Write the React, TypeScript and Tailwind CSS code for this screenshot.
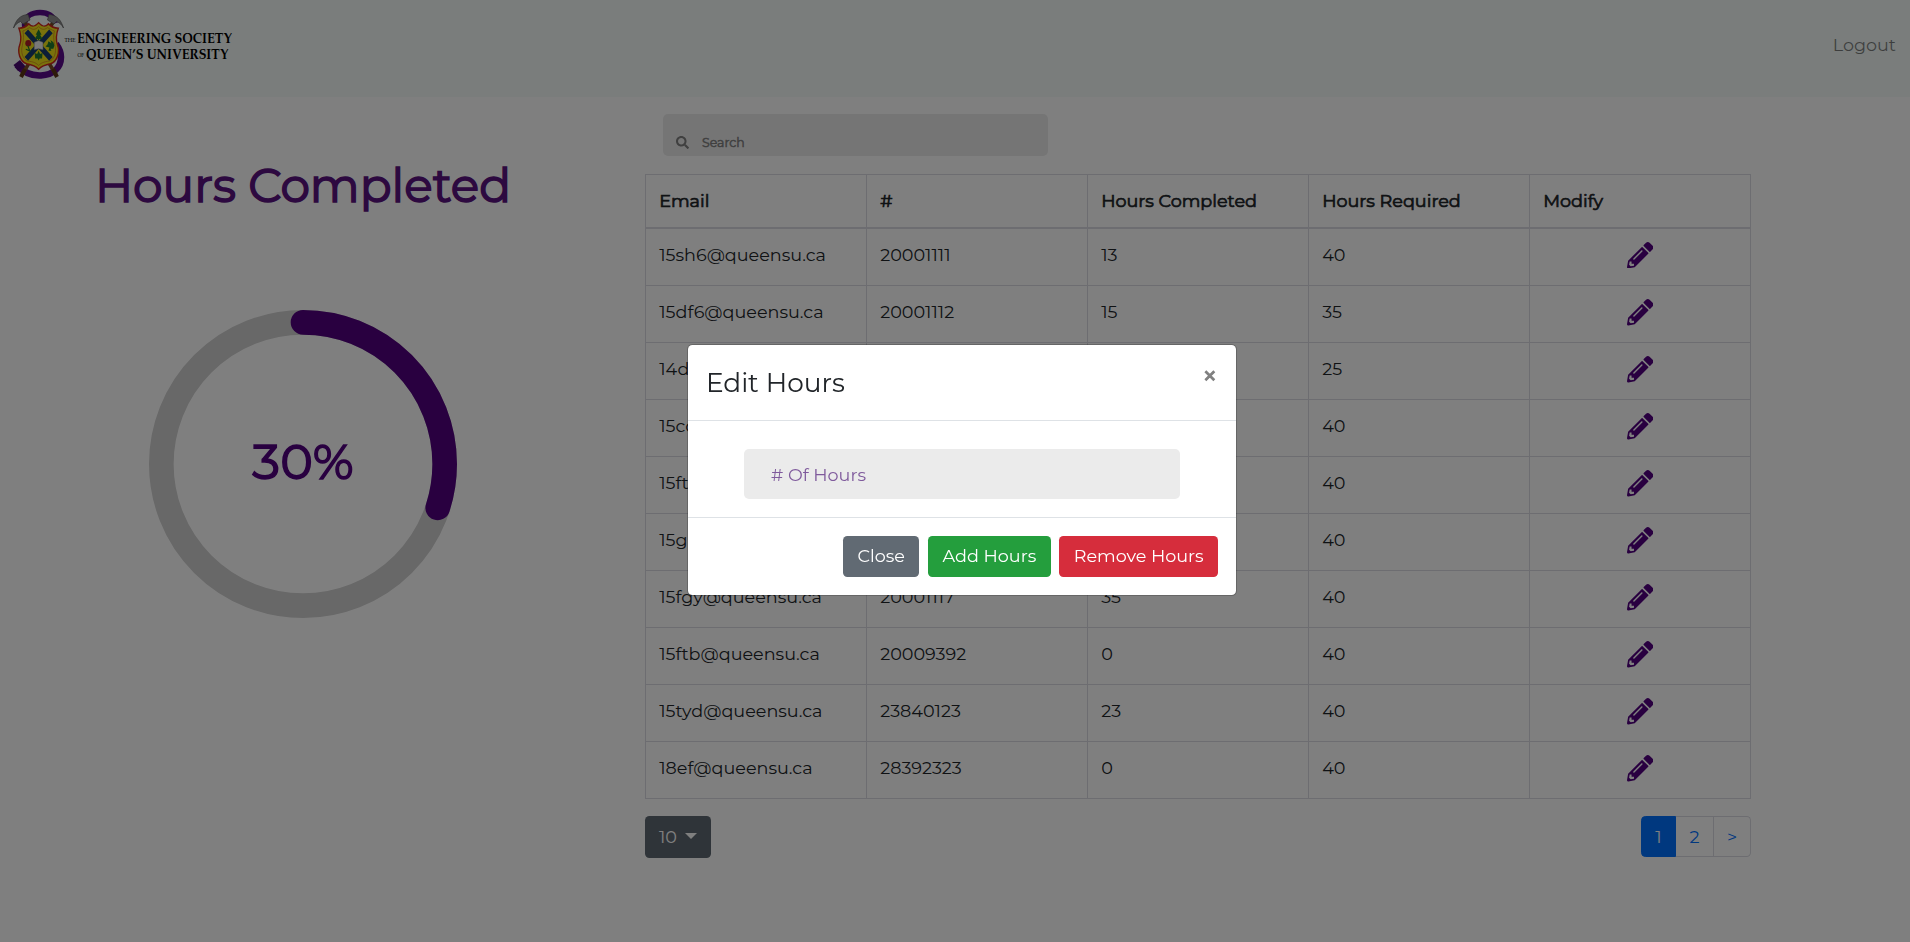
import { FaPencilAlt, FaSearch } from "react-icons/fa";

type Row = { email: string; id: string; completed: number; required: number };

const rows: Row[] = [
  { email: "15sh6@queensu.ca", id: "20001111", completed: 13, required: 40 },
  { email: "15df6@queensu.ca", id: "20001112", completed: 15, required: 35 },
  { email: "14df@queensu.ca", id: "20001113", completed: 20, required: 25 },
  { email: "15cd@queensu.ca", id: "20001114", completed: 10, required: 40 },
  { email: "15ft@queensu.ca", id: "20001115", completed: 12, required: 40 },
  { email: "15gh@queensu.ca", id: "20001116", completed: 30, required: 40 },
  { email: "15fgy@queensu.ca", id: "20001117", completed: 35, required: 40 },
  { email: "15ftb@queensu.ca", id: "20009392", completed: 0, required: 40 },
  { email: "15tyd@queensu.ca", id: "23840123", completed: 23, required: 40 },
  { email: "18ef@queensu.ca", id: "28392323", completed: 0, required: 40 },
];

const headers = ["Email", "#", "Hours Completed", "Hours Required", "Modify"];

function Crest() {
  return (
    <svg width="54" height="74" viewBox="0 0 54 74" className="shrink-0">
      {/* ribbon */}
      <path d="M43 16C40 8 34 5.500 27 5.500C18 5.500 12.500 10 11.500 16L12 26" fill="none" stroke="#5b0a8c" strokeWidth="5.500" />
      <path d="M4 58C11 66 18 69 28 68.500C40 68 48 61 48 50C48 45 46 41 43 37" fill="none" stroke="#5b0a8c" strokeWidth="6.500" />
      <path d="M0.500 58L7 53L13 60L5 64Z" fill="#4a0a72" />
      {/* hammers */}
      <path d="M10 12L43 68M42 12L9 68" stroke="#7a4a22" strokeWidth="3.500" />
      <path d="M8 70L12 62M44 70L40 62" stroke="#5c3414" strokeWidth="4" />
      <path d="M0.500 21C3 13 7 8 15 7.500L17 13L10 17L7.500 14.500C4 16 2 18 0.500 21Z" fill="#909090" stroke="#5a5a5a" strokeWidth="0.700" />
      <path d="M50.500 21C48 13 44 8 36 7.500L34.500 13L41 17L43.500 14.500C47 16 49 18 50.500 21Z" fill="#909090" stroke="#5a5a5a" strokeWidth="0.700" />
      {/* shield */}
      <g transform="translate(0 -1.500) scale(0.985 1.080)">
        <path
          d="M6 21C11 21 14 19 16 17C20 21 23 19 26 16C29 19 32 21 36 17C38 19 41 21 46 21C44 26 43 30 45 36C48 43 45 52 38 54C32 55 29 56 26 59C23 56 20 55 14 54C7 52 4 43 7 36C9 30 8 26 6 21Z"
          fill="#f2e418"
          stroke="#d0281e"
          strokeWidth="1.400"
        />
        <path
          d="M10 23.500C13 23 15 21 17 20.500C21 23.500 24 21.500 26 19.500C28 21.500 31 23.500 35 20.500C37 21.500 40 23 42 23.500C41 28 41 31 42.500 37C44.500 43 42 50 37 51.500C31 52 28 53.500 26 55.500C24 53.500 21 52 15 51.500C10 50 7.500 43 9.500 37C11 31 11 28 10 23.500Z"
          fill="none"
          stroke="#d0701e"
          strokeWidth="0.600"
        />
        <path d="M13.500 24L38.500 49.500M38.500 24L13.500 49.500" stroke="#173c6e" strokeWidth="5" />
        <path d="M26 22L29 27H27.500L30 31H26.600V33H25.400V31H22L24.500 27H23Z" fill="#1e7a2e" />
        <path d="M36 33L39 35L38 32L41 34L42 37L41 40H38L39 42H36L37 39L33 38L35 36Z" fill="#1e7a2e" />
        <path d="M26 42L27.500 45L30 44L29.500 49H27L26 51L25 49H22.500L22 44L24.500 45Z" fill="#1e7a2e" />
        <circle cx="15.500" cy="35" r="3" fill="#b01c24" />
        <path d="M15 37L17 42L13 40.500" fill="none" stroke="#1e7a2e" strokeWidth="1.200" />
        <path d="M21.500 34L26 32.500L30.500 34V41L26 40L21.500 41Z" fill="#f2f2f2" stroke="#777777" strokeWidth="0.500" />
      </g>
    </svg>
  );
}

function Brand() {
  return (
    <div className="flex items-start">
      <Crest />
      <svg
        width="180"
        height="46"
        viewBox="0 -4 180 46"
        className="-ml-[3px] mt-[15px] overflow-visible"
        fill="#000000"
        fontFamily="'Palatino Linotype', 'Palatino', 'TeX Gyre Pagella', 'Liberation Serif', serif"
      >
        <text x="0.500" y="15.500" fontSize="5" textLength="11" lengthAdjust="spacingAndGlyphs">THE</text>
        <text x="13" y="17" fontSize="14" fontWeight="700" textLength="155" lengthAdjust="spacingAndGlyphs">ENGINEERING SOCIETY</text>
        <text x="13.500" y="31" fontSize="5" textLength="6.500" lengthAdjust="spacingAndGlyphs">OF</text>
        <text x="22" y="32.500" fontSize="14" fontWeight="700" textLength="142.500" lengthAdjust="spacingAndGlyphs">QUEEN’S UNIVERSITY</text>
      </svg>
    </div>
  );
}

function Navbar() {
  return (
    <nav className="flex h-[97px] items-start justify-between bg-[#f4faf8] pl-[13px] pr-[14px] pt-[7px]">
      <Brand />
      <a className="mt-[25px] leading-[26.4px] text-black/50">Logout</a>
    </nav>
  );
}

function HoursRing({ value }: { value: number }) {
  const circumference = 2 * Math.PI * 46;
  return (
    <div className="mt-[94px] grid h-[308px] w-[308px] place-items-center">
      <svg viewBox="0 0 100 100" className="col-start-1 row-start-1 h-full w-full -rotate-90">
        <circle cx="50" cy="50" r="46" fill="none" stroke="#d0d0d0" strokeWidth="8" />
        <circle
          cx="50"
          cy="50"
          r="46"
          fill="none"
          stroke="#520080"
          strokeWidth="8"
          strokeLinecap="round"
          strokeDasharray={`${(circumference * value) / 100} ${circumference}`}
        />
      </svg>
      <span className="col-start-1 row-start-1 -mt-[5px] text-[49.300px] leading-none text-[#520080] [-webkit-text-stroke:1.5px_#520080]">{value}%</span>
    </div>
  );
}

function HoursTable() {
  return (
    <table className="mt-[18px] w-[1106px] table-fixed border-collapse text-left text-[#212529]">
      <thead>
        <tr className="h-[53px]">
          {headers.map((h) => (
            <th
              key={h}
              className="border border-b-2 border-[#dadae2] px-[13.2px] pt-[1px] font-normal leading-[26.4px] [-webkit-text-stroke:0.7px_#212529]"
            >
              {h}
            </th>
          ))}
        </tr>
      </thead>
      <tbody>
        {rows.map((r) => (
          <tr key={r.id} className="h-[57px] first:h-[58px]">
            <td className="border border-[#dadae2] px-[13.2px] pb-[3px]">{r.email}</td>
            <td className="border border-[#dadae2] px-[13.2px] pb-[3px]">{r.id}</td>
            <td className="border border-[#dadae2] px-[13.2px] pb-[3px]">{r.completed}</td>
            <td className="border border-[#dadae2] px-[13.2px] pb-[3px]">{r.required}</td>
            <td className="border border-[#dadae2] px-[13.2px] pb-[3px]">
              <FaPencilAlt className="mx-auto text-[26.4px] text-[#520080]" />
            </td>
          </tr>
        ))}
      </tbody>
    </table>
  );
}

function TableFooter() {
  return (
    <div className="mt-[17px] flex w-[1106px] items-start justify-between">
      <button className="flex h-[42px] w-[66px] items-center rounded-[4.4px] bg-[#5f6973] pl-[14px] text-white">
        10
        <span className="-mt-[2px] ml-[8px] border-x-6 border-t-6 border-x-transparent border-t-white" />
      </button>
      <div className="flex h-[41px] leading-[39px] text-[#0070ff]">
        <span className="w-[35px] rounded-l-[4.4px] border border-[#0070ff] bg-[#0070ff] text-center text-white">1</span>
        <span className="w-[38px] border-y border-r border-[#dadae2] text-center">2</span>
        <span className="w-[37px] rounded-r-[4.4px] border-y border-r border-[#dadae2] text-center">&gt;</span>
      </div>
    </div>
  );
}

function EditHoursModal() {
  return (
    <div className="fixed inset-0 flex items-start justify-center bg-black/50 pl-[13px] pt-[344px]">
      <div className="w-[550px] rounded-[5.3px] border border-black/20 bg-white bg-clip-padding">
        <div className="flex h-[76px] items-start justify-between border-b border-[#dee2e6] pl-[18.4px] pr-[18px]">
          <h5 className="mt-[18px] text-[26.4px] leading-[39.6px] text-[#212529]">Edit Hours</h5>
          <button className="mt-[18px] text-[26.4px] leading-[26.4px] text-[#808080] [-webkit-text-stroke:1.2px_#808080]">×</button>
        </div>
        <div className="flex h-[97px] justify-center border-b border-[#dee2e6] pt-[28px]">
          <div className="flex h-[50px] w-[436px] items-center rounded-[5px] bg-[#ebebeb] pl-[27.6px] pt-[2px] text-[#7f5a9c]"># Of Hours</div>
        </div>
        <div className="flex h-[77px] items-center justify-end gap-[8.8px] pr-[17.6px] text-white">
          <button className="h-[41px] rounded-[4.4px] bg-[#616a73] px-[14.400px]">Close</button>
          <button className="h-[41px] rounded-[4.4px] bg-[#249e3d] px-[14.400px]">Add Hours</button>
          <button className="h-[41px] rounded-[4.4px] bg-[#d62d3c] px-[14.2px]">Remove Hours</button>
        </div>
      </div>
    </div>
  );
}

export default function App() {
  return (
    <div className="min-h-[942px] bg-white font-['Montserrat','Inter',sans-serif] text-[17.6px] leading-[26.4px]">
      <Navbar />
      <main className="flex">
        <section className="flex w-[606px] flex-col items-center pt-[59px]">
          <h1 className="text-[47px] leading-[60px] text-[#5a1280] [-webkit-text-stroke:1.5px_#5a1280]">Hours Completed</h1>
          <HoursRing value={30} />
        </section>
        <section className="pl-[39px] pt-[17px]">
          <div className="ml-[18px] flex h-[42px] w-[385px] items-end rounded-[5px] bg-[#ebebeb] pb-[4px] pl-[13px] text-[#808080]">
            <FaSearch className="mb-[3px] text-[13px]" />
            <span className="ml-[13px] text-[12.500px] leading-[18px] [-webkit-text-stroke:0.5px_#808080]">Search</span>
          </div>
          <HoursTable />
          <TableFooter />
        </section>
      </main>
      <EditHoursModal />
    </div>
  );
}
